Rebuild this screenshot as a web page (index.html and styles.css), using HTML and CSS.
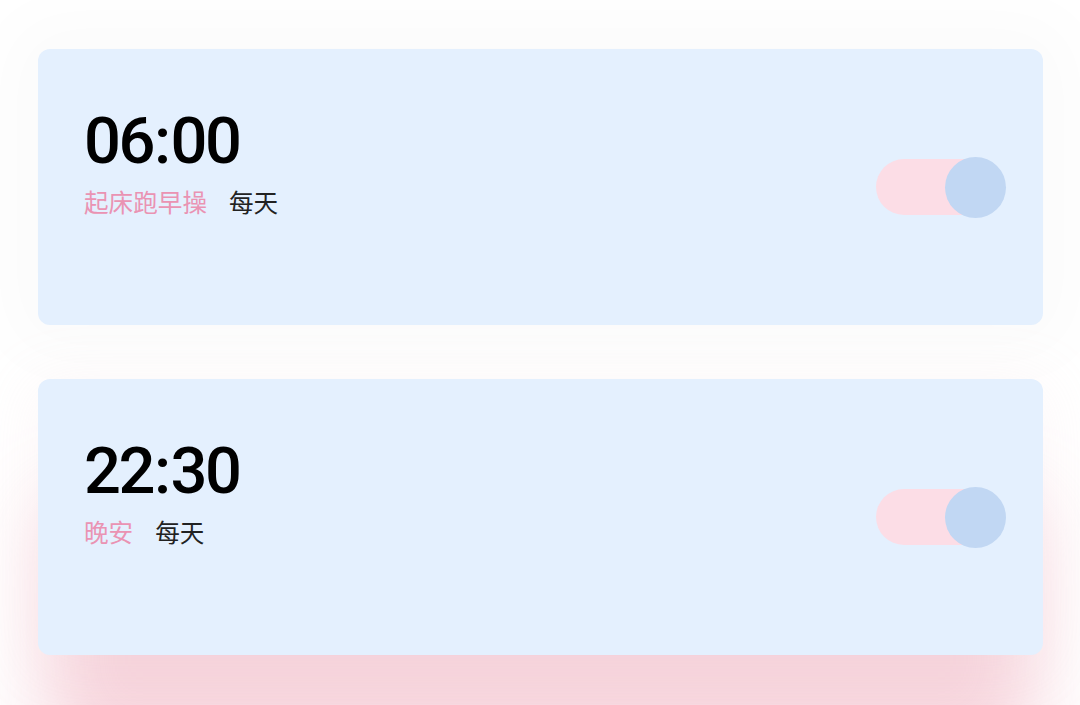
FILE: index.html
```html
<!DOCTYPE html>
<html lang="zh">
<head>
<meta charset="utf-8">
<link rel="stylesheet" href="styles.css">
</head>
<body>
<div class="list">
  <div class="card card-first">
    <div class="info">
      <div class="time">06<span class="colon">:</span>00</div>
      <div class="meta"><span class="label">起床跑早操</span><span class="repeat">每天</span></div>
    </div>
    <div class="toggle"><span class="knob"></span></div>
  </div>
  <div class="card card-second">
    <div class="info">
      <div class="time">22<span class="colon">:</span>30</div>
      <div class="meta"><span class="label">晚安</span><span class="repeat">每天</span></div>
    </div>
    <div class="toggle"><span class="knob"></span></div>
  </div>
</div>
</body>
</html>
```
FILE: styles.css
```css
html, body {
  margin: 0;
  height: 705px;
  overflow: hidden;
  background: #ffffff;
}
.list {
  display: flex;
  flex-direction: column;
  gap: 54px;
  padding: 49px 37px 0 38px;
}
.card {
  position: relative;
  height: 276px;
  box-sizing: border-box;
  background: #e4f0fe;
  border-radius: 12px;
  display: flex;
  justify-content: space-between;
  align-items: center;
  padding: 0 38px 0 46px;
}
.card-first {
  box-shadow: 0 0 70px 30px rgba(0, 0, 0, 0.02);
}
.card-second {
  box-shadow: 0 10px 60px 10px rgba(240, 200, 205, 0.12), 0 115px 80px -10px rgba(238, 168, 184, 0.48);
}
.info {
  align-self: flex-start;
  padding-top: 56px;
  display: flex;
  flex-direction: column;
}
.time {
  font-family: Roboto, "Noto Sans", sans-serif;
  font-weight: 500;
  font-size: 65px;
  line-height: 72px;
  color: #000;
  letter-spacing: -2.5px;
}
.colon {
  margin: 0 2px 0 1px;
}
.meta {
  display: flex;
  gap: 22px;
  margin-top: 8px;
  font-family: "Noto Sans CJK SC", sans-serif;
  font-size: 24.6px;
  line-height: 32px;
}
.label { color: #ea93b3; }
.repeat { color: #222; }
.toggle {
  position: relative;
  width: 124px;
  height: 56px;
  border-radius: 28px;
  background: #fcdde6;
  margin-right: 5px;
}
.knob {
  position: absolute;
  right: -6px;
  top: -2px;
  width: 61px;
  height: 61px;
  border-radius: 50%;
  background: #c1d7f3;
}
```
